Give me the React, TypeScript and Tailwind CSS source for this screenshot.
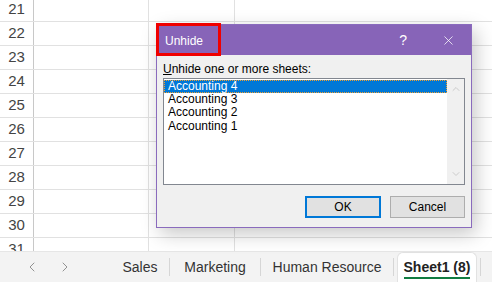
import { ChevronLeft, ChevronRight, ChevronUp, ChevronDown, X } from "lucide-react";

const rows = [21, 22, 23, 24, 25, 26, 27, 28, 29, 30, 31];
const sheets = ["Accounting 4", "Accounting 3", "Accounting 2", "Accounting 1"];

function Grid() {
  return (
    <div className="h-[251px] overflow-hidden bg-white">
      <div className="-mt-[2px]">
        {rows.map((r) => (
          <div key={r} className="flex h-[24px] border-b border-[#e1e1e1]">
            <div className="w-[34px] shrink-0 border-r border-[#c8c8c8] flex items-center justify-center text-[15px] text-[#444]">
              {r}
            </div>
            <div className="w-[115px] shrink-0 border-r border-[#e1e1e1]" />
            <div className="w-[86px] shrink-0 border-r border-[#e1e1e1]" />
            <div className="flex-1" />
          </div>
        ))}
      </div>
    </div>
  );
}

function Tabs() {
  return (
    <div className="h-[31px] flex items-stretch bg-[#f3f3f3] border-t border-[#e6e6e6] text-[14px] text-[#333]">
      <div className="w-[111px] flex items-center text-[#8a8a8a]">
        <ChevronLeft size={16} strokeWidth={1.4} className="ml-[24px]" />
        <ChevronRight size={16} strokeWidth={1.4} className="ml-[17px]" />
      </div>
      <div className="w-[58px] flex items-center justify-center">Sales</div>
      <div className="w-px my-[6px] bg-[#d6d6d6]" />
      <div className="w-[90px] flex items-center justify-center">Marketing</div>
      <div className="w-px my-[6px] bg-[#d6d6d6]" />
      <div className="w-[132px] flex items-center justify-center">Human Resource</div>
      <div className="w-px my-[6px] bg-[#d6d6d6]" />
      <div className="w-[3px]" />
      <div className="w-[80px] bg-white rounded-t-[6px] border-x border-t border-[#e2e2e2] flex flex-col items-center justify-center">
        <span className="font-bold text-[#222] leading-[18px] border-b-2 border-[#107c41] pb-[1px] mt-[2px]">
          Sheet1 (8)
        </span>
      </div>
      <div className="w-[3px]" />
      <div className="w-px my-[6px] bg-[#d6d6d6]" />
      <div className="flex-1" />
    </div>
  );
}

function Dialog() {
  return (
    <div className="absolute left-[156px] top-[24px] w-[316px] h-[204px] border border-[#8a6bbd] bg-[#f0f0f0] shadow-[4px_6px_18px_rgba(0,0,0,0.22)] text-[12px] text-black">
      <div className="h-[30px] bg-[#8764b8] flex items-center text-white">
        <span className="ml-[8px] mt-[1px]">Unhide</span>
        <span className="ml-auto mr-[34px] text-[14px] mt-[1px]">?</span>
        <X size={15} strokeWidth={1.2} className="mr-[15px]" />
      </div>
      <div className="px-[6px] pt-[7px]">
        <div className="leading-[14px]">
          <span className="underline">U</span>nhide one or more sheets:
        </div>
        <div className="mt-[2px] h-[107px] border border-[#828790] bg-white flex">
          <div className="flex-1 pt-[1px]">
            {sheets.map((s, i) => (
              <div
                key={s}
                className={
                  i === 0
                    ? "h-[13px] leading-[11px] pl-[3px] bg-[#0078d7] text-white border border-dotted border-[#f0a030]"
                    : "h-[13.4px] leading-[13.4px] pl-[4px]"
                }
              >
                {s}
              </div>
            ))}
          </div>
          <div className="w-[17px] bg-[#f0f0f0] flex flex-col items-center justify-between py-[4px] text-[#c2c2c2]">
            <ChevronUp size={12} strokeWidth={1.6} />
            <ChevronDown size={12} strokeWidth={1.6} />
          </div>
        </div>
        <div className="mt-[11px] flex justify-end gap-[9px]">
          <button className="w-[76px] h-[22px] border-2 border-[#0078d7] bg-[#e1e1e1]">OK</button>
          <button className="w-[75px] h-[22px] border border-[#adadad] bg-[#e1e1e1]">Cancel</button>
        </div>
      </div>
      <div className="absolute -left-px -top-[2px] w-[65px] h-[33px] border-[3px] border-[#f00000]" />
    </div>
  );
}

export default function App() {
  return (
    <div
      className="relative w-[492px] h-[282px] overflow-hidden bg-white"
      style={{ fontFamily: '"Liberation Sans", Arial, sans-serif' }}
    >
      <Grid />
      <Tabs />
      <Dialog />
    </div>
  );
}
